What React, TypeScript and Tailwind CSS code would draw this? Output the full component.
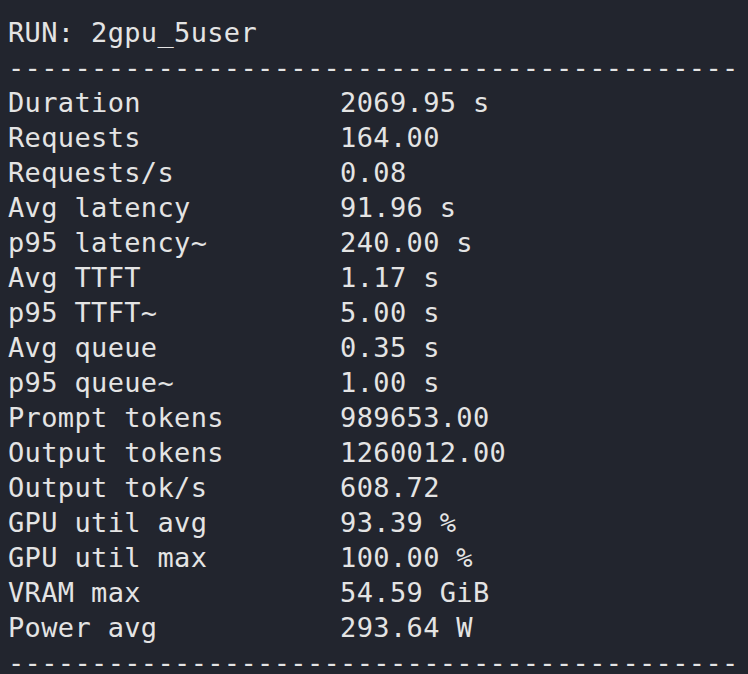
const rows: [string, string][] = [
  ["Duration", "2069.95 s"],
  ["Requests", "164.00"],
  ["Requests/s", "0.08"],
  ["Avg latency", "91.96 s"],
  ["p95 latency~", "240.00 s"],
  ["Avg TTFT", "1.17 s"],
  ["p95 TTFT~", "5.00 s"],
  ["Avg queue", "0.35 s"],
  ["p95 queue~", "1.00 s"],
  ["Prompt tokens", "989653.00"],
  ["Output tokens", "1260012.00"],
  ["Output tok/s", "608.72"],
  ["GPU util avg", "93.39 %"],
  ["GPU util max", "100.00 %"],
  ["VRAM max", "54.59 GiB"],
  ["Power avg", "293.64 W"],
];

const rule = "-".repeat(44);

export default function App() {
  return (
    <div className="w-[748px] h-[674px] overflow-hidden bg-[#22252e] text-[#e4e4e4] pl-2 pt-[15px] font-['DejaVu_Sans_Mono',monospace] text-[27px] tracking-[0.35px] leading-[35px] whitespace-pre">
      <div>RUN: 2gpu_5user</div>
      <div>{rule}</div>
      {rows.map(([label, value]) => (
        <div key={label}>
          {label.padEnd(20)}
          {value}
        </div>
      ))}
      <div>{rule}</div>
    </div>
  );
}
